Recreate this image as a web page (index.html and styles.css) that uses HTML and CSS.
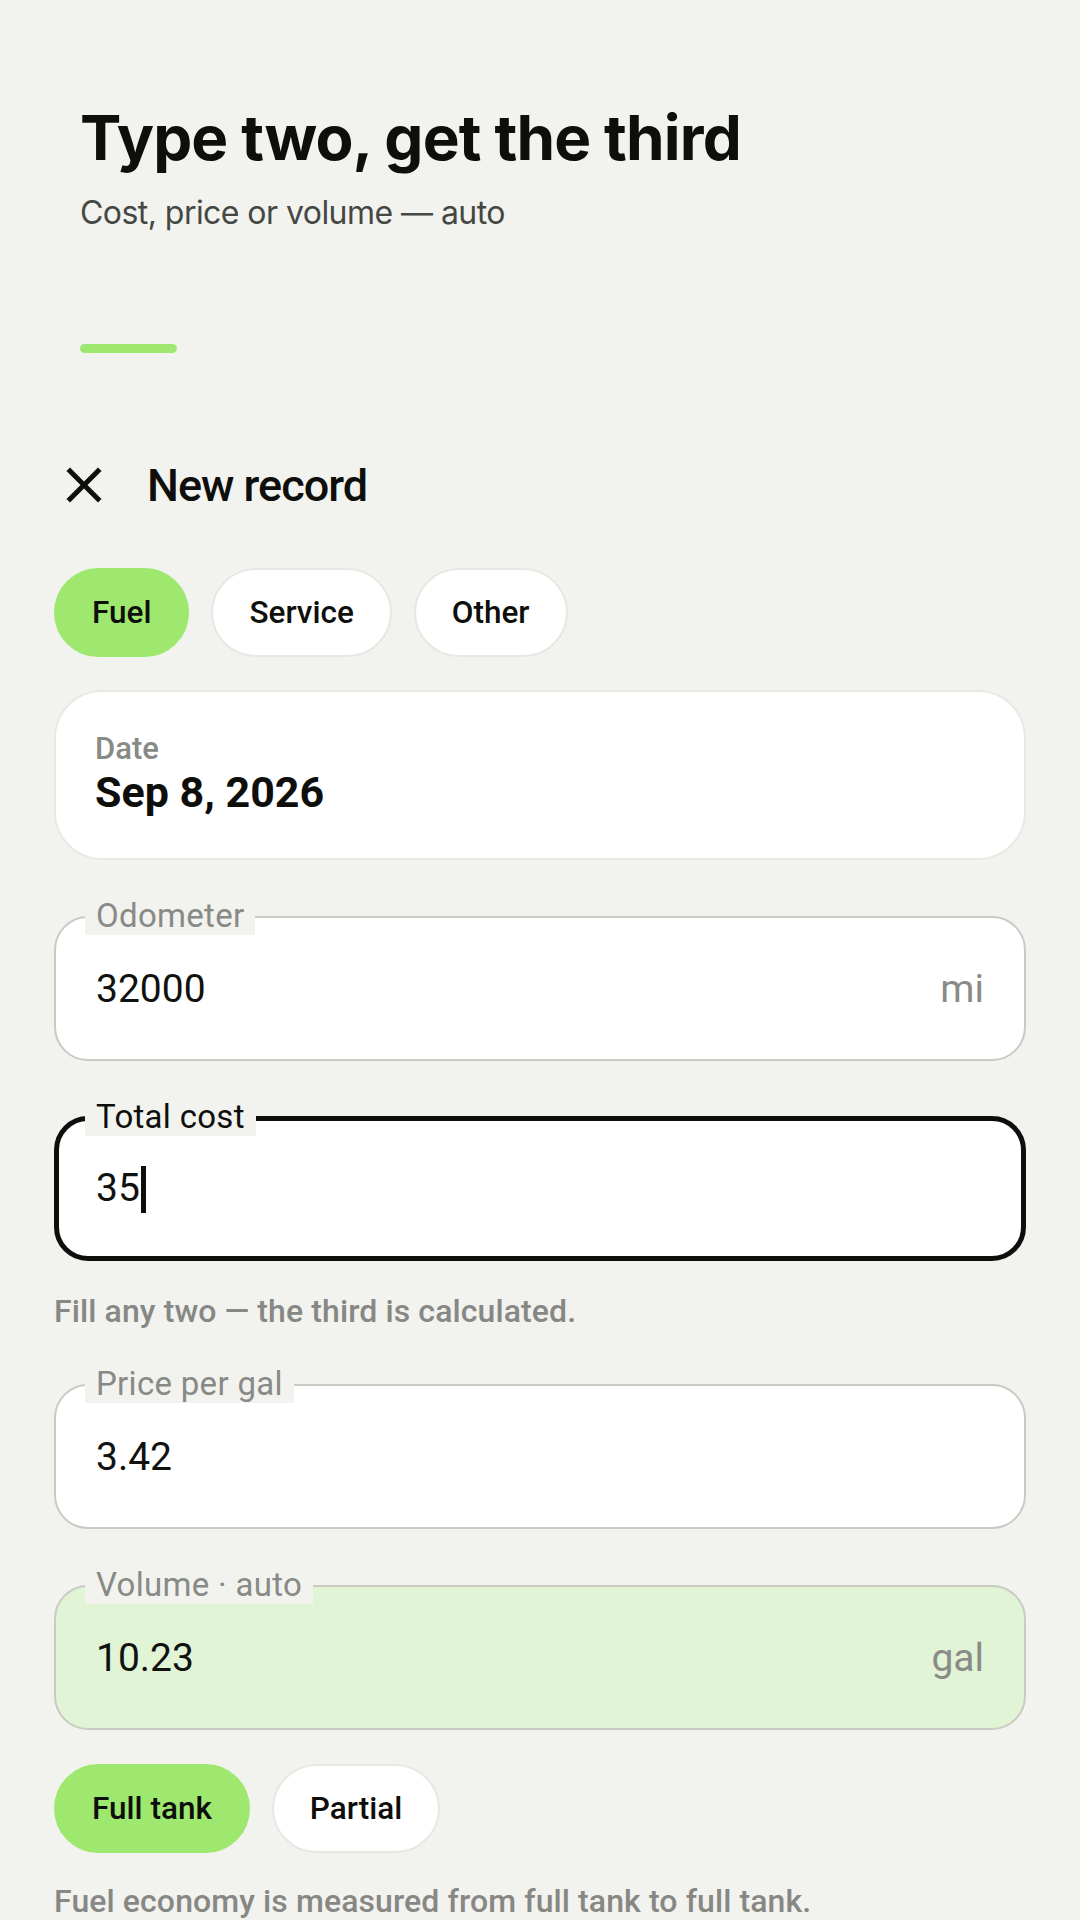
FILE: index.html
```html
<!DOCTYPE html>
<html lang="en">
<head>
<meta charset="utf-8">
<title>New record</title>
<link rel="stylesheet" href="styles.css">
</head>
<body>
<div class="screen">
  <header class="intro">
    <h1 class="intro-title">Type two, get the third</h1>
    <p class="intro-sub">Cost, price or volume — auto</p>
    <div class="progress"></div>
  </header>

  <main class="sheet">
    <div class="sheet-head">
      <svg class="close" viewBox="0 0 24 24" aria-hidden="true"><path d="M19 6.41L17.59 5 12 10.59 6.41 5 5 6.41 10.59 12 5 17.59 6.41 19 12 13.41 17.59 19 19 17.59 13.41 12z"/></svg>
      <h2 class="sheet-title">New record</h2>
    </div>

    <div class="chips">
      <span class="chip active">Fuel</span>
      <span class="chip">Service</span>
      <span class="chip">Other</span>
    </div>

    <div class="date-card">
      <div class="date-label">Date</div>
      <div class="date-value">Sep 8, 2026</div>
    </div>

    <div class="field">
      <span class="field-label">Odometer</span>
      <span class="field-value">32000</span>
      <span class="field-unit">mi</span>
    </div>

    <div class="field focus">
      <span class="field-label">Total cost</span>
      <span class="field-value">35<span class="caret"></span></span>
    </div>

    <p class="hint">Fill any two — the third is calculated.</p>

    <div class="field field-price">
      <span class="field-label">Price per gal</span>
      <span class="field-value">3.42</span>
    </div>

    <div class="field auto">
      <span class="field-label">Volume · auto</span>
      <span class="field-value">10.23</span>
      <span class="field-unit">gal</span>
    </div>

    <div class="chips chips-tank">
      <span class="chip active">Full tank</span>
      <span class="chip">Partial</span>
    </div>

    <p class="footnote">Fuel economy is measured from full tank to full tank.</p>
  </main>
</div>
</body>
</html>
```

FILE: styles.css
```css
html, body {
  margin: 0;
  padding: 0;
  background: #f2f3ef;
}

.screen {
  width: 1080px;
  height: 1920px;
  overflow: hidden;
  background: #f2f3ef;
  font-family: Roboto, "Noto Sans", sans-serif;
  color: #0e0f0c;
}

.intro {
  padding: 100px 80px 0;
}

.intro-title {
  margin: 0;
  font-family: Inter, "Noto Sans", sans-serif;
  font-weight: 700;
  font-size: 62px;
  line-height: 75px;
  letter-spacing: -0.85px;
  color: #0e0f0c;
}

.intro-sub {
  margin: 18px 0 0;
  font-family: Inter, "Noto Sans", sans-serif;
  font-weight: 400;
  font-size: 32px;
  line-height: 39px;
  letter-spacing: -0.55px;
  color: #454743;
}

.progress {
  width: 97px;
  height: 9px;
  border-radius: 5px;
  background: #9fe870;
  margin-top: 112px;
}

.sheet {
  padding: 0 54px;
}

.sheet-head {
  display: flex;
  align-items: center;
  height: 60px;
  margin-top: 102px;
}

.close {
  width: 60px;
  height: 60px;
  fill: #0e0f0c;
  flex: none;
}

.sheet-title {
  margin: 0 0 0 33px;
  font-weight: 500;
  font-size: 45px;
  letter-spacing: -1px;
  color: #0e0f0c;
}

.chips {
  display: flex;
  gap: 22px;
  margin-top: 53px;
}

.chip {
  box-sizing: border-box;
  height: 89px;
  padding: 0 36px;
  display: flex;
  align-items: center;
  border-radius: 45px;
  border: 2px solid #e7e8e4;
  background: #ffffff;
  font-weight: 500;
  font-size: 31.5px;
  color: #0e0f0c;
}

.chip.active {
  background: #9fe870;
  border-color: #9fe870;
}

.date-card {
  margin-top: 33px;
  background: #ffffff;
  border: 2px solid #e8e9e5;
  border-radius: 48px;
  padding: 39px 40px 41px 39px;
}

.date-label {
  font-weight: 500;
  font-size: 31px;
  line-height: 36px;
  color: #888a86;
}

.date-value {
  font-weight: 700;
  font-size: 43px;
  line-height: 50px;
  color: #0e0f0c;
}

.field {
  position: relative;
  box-sizing: border-box;
  height: 145px;
  margin-top: 56px;
  padding: 0 40px;
  display: flex;
  align-items: center;
  border: 2px solid #c9cac4;
  border-radius: 34px;
  background: #ffffff;
}

.field-label {
  position: absolute;
  left: 29px;
  top: -21px;
  padding: 0 11px;
  background: #f2f3ef;
  font-weight: 400;
  font-size: 33px;
  line-height: 38px;
  letter-spacing: 0.3px;
  color: #888a86;
}

.field-value {
  flex: 1;
  font-size: 39px;
  line-height: 46px;
  color: #111210;
}

.field-unit {
  font-size: 39px;
  line-height: 46px;
  color: #8a8b87;
}

.field.focus {
  margin-top: 55px;
  border: 5px solid #0e0f0c;
  padding: 0 37px;
}

.field.focus .field-label {
  left: 26px;
  top: -23px;
  color: #0e0f0c;
}

.caret {
  display: inline-block;
  width: 5px;
  height: 47px;
  margin-left: 1px;
  background: #0e0f0c;
  vertical-align: -12px;
}

.field.auto {
  background: #e1f4d5;
}

.field-price {
  margin-top: 54px;
}

.hint {
  margin: 32px 0 0;
  font-weight: 500;
  font-size: 32px;
  line-height: 37px;
  letter-spacing: 0.1px;
  color: #878884;
}

.chips-tank {
  margin-top: 34px;
}

.footnote {
  margin: 30px 0 0;
  font-weight: 500;
  font-size: 32px;
  line-height: 37px;
  letter-spacing: 0.1px;
  color: #878884;
  white-space: nowrap;
}
```
